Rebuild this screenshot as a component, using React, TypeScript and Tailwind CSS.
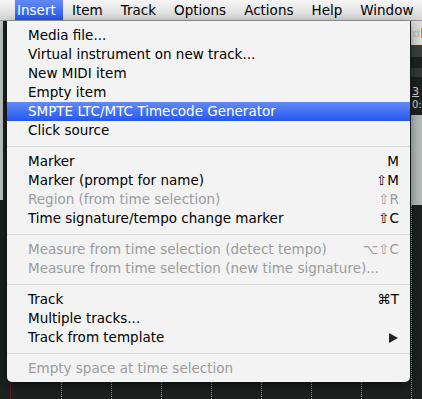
const font = { fontFamily: '"DejaVu Sans", Verdana, sans-serif' };

type Row =
  | { kind: "sep" }
  | { kind: "item"; label: string; key?: string; disabled?: boolean; active?: boolean; sub?: boolean };

const rows: Row[] = [
  { kind: "item", label: "Media file..." },
  { kind: "item", label: "Virtual instrument on new track..." },
  { kind: "item", label: "New MIDI item" },
  { kind: "item", label: "Empty item" },
  { kind: "item", label: "SMPTE LTC/MTC Timecode Generator", active: true },
  { kind: "item", label: "Click source" },
  { kind: "sep" },
  { kind: "item", label: "Marker", key: "M" },
  { kind: "item", label: "Marker (prompt for name)", key: "⇧M" },
  { kind: "item", label: "Region (from time selection)", key: "⇧R", disabled: true },
  { kind: "item", label: "Time signature/tempo change marker", key: "⇧C" },
  { kind: "sep" },
  { kind: "item", label: "Measure from time selection (detect tempo)", key: "⌥⇧C", disabled: true },
  { kind: "item", label: "Measure from time selection (new time signature)...", disabled: true },
  { kind: "sep" },
  { kind: "item", label: "Track", key: "⌘T" },
  { kind: "item", label: "Multiple tracks..." },
  { kind: "item", label: "Track from template", sub: true },
  { kind: "sep" },
  { kind: "item", label: "Empty space at time selection", disabled: true },
];

function MenuBar() {
  return (
    <div className="h-[21px] flex items-stretch bg-linear-to-b from-[#f6f6f6] to-[#d6d6d6] border-b border-[#9a9a9a] text-[13.5px] text-black pl-[15px] whitespace-nowrap">
      <div className="w-[48px] pl-[2px] flex items-center text-white bg-linear-to-b from-[#6489f6] to-[#2456ee]">
        Insert
      </div>
      <div className="flex items-center gap-[18px] ml-[9px]">
        <span>Item</span>
        <span>Track</span>
        <span>Options</span>
        <span>Actions</span>
        <span>Help</span>
        <span>Window</span>
      </div>
    </div>
  );
}

function Backdrop() {
  return (
    <div className="flex h-[378px]">
      <div className="w-[411px] flex">
        <div className="w-[3px] flex flex-col">
          <div className="h-[179px] bg-[#c4c8c6]" />
          <div className="flex-1 bg-[#1d2220]" />
        </div>
        <div className="w-[7px] bg-[#1d2220]" />
        <div className="w-px bg-[#5b1e1e]" />
        <div className="w-px bg-[#1d2220]" />
        <div className="flex-1 flex bg-[#1d2220]">
          {Array.from({ length: 7 }).map((_, i) => (
            <div key={i} className="w-[50px] border-r border-dotted border-[#8f9492]" />
          ))}
        </div>
      </div>
      <div className="flex-1 flex flex-col overflow-hidden text-[11px] leading-none">
        <div className="h-[24px] bg-[#dcdcda] flex items-center pl-[2px] text-[#b9b9b7]">
          d<span className="ml-px w-[2px] h-[10px] bg-[#d88a2a]" />
        </div>
        <div className="h-[12px] bg-[#3b403e]" />
        <div className="h-[11px] bg-[#1d2220]" />
        <div className="h-[9px] bg-[#343937]" />
        <div className="h-[38px] bg-[#1d2220] pl-px pt-[9px] text-[#d4d8d6]">
          <div className="underline">3</div>
          <div className="mt-[3px] text-[10px]">0:</div>
        </div>
        <div className="h-[90px] bg-[#b3bbb8]" />
        <div className="flex-1 bg-[#1d2220] border-l border-dotted border-[#8f9492]" />
      </div>
    </div>
  );
}

function Menu() {
  return (
    <div className="absolute top-[21px] left-[7px] w-[403px] bg-[#f3f3f3] rounded-b-[5px] pt-[5px] pb-[4px] shadow-[0_4px_12px_rgba(0,0,0,0.55)] text-[13.5px] whitespace-nowrap">
      {rows.map((r, i) =>
        r.kind === "sep" ? (
          <div key={i} className="h-[12px] flex items-center">
            <div className="h-px w-full bg-[#d8d8d8]" />
          </div>
        ) : (
          <div
            key={i}
            className={
              "h-[19px] flex items-center justify-between pl-[21px] pr-[11px] " +
              (r.active
                ? "bg-linear-to-b from-[#6489f6] to-[#2456ee] text-white"
                : r.disabled
                ? "text-[#9b9b9b]"
                : "text-black")
            }
          >
            <span>{r.label}</span>
            {r.key && <span>{r.key}</span>}
            {r.sub && (
              <svg width="9" height="10" viewBox="0 0 9 10" className="mr-px">
                <path d="M0 0 L9 5 L0 10 Z" fill="#222" />
              </svg>
            )}
          </div>
        )
      )}
    </div>
  );
}

export default function App() {
  return (
    <div className="w-[422px] h-[399px] relative overflow-hidden bg-[#1d2220]" style={font}>
      <MenuBar />
      <Backdrop />
      <Menu />
    </div>
  );
}
